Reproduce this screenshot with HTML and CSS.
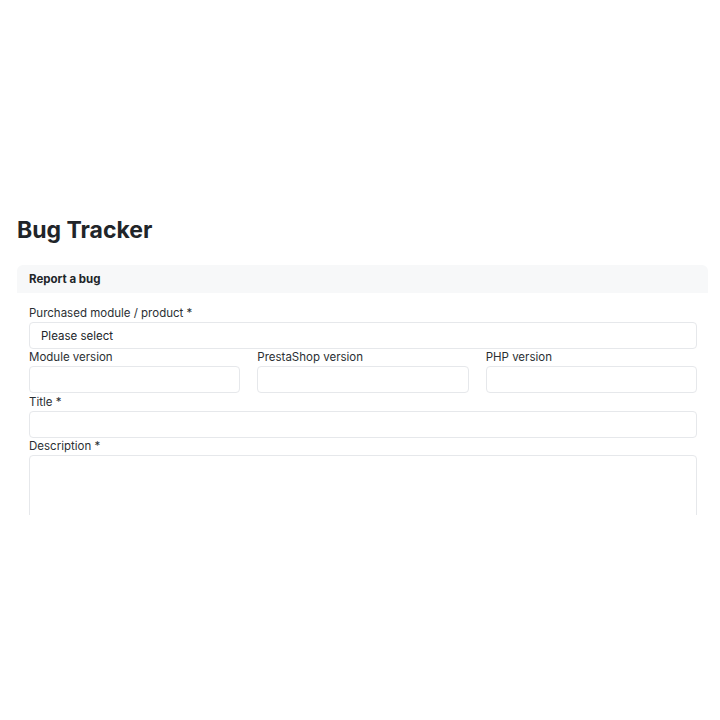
FILE: index.html
```html
<!DOCTYPE html>
<html lang="en">

<head>
    <meta charset="UTF-8">
    <meta name="viewport" content="width=device-width, initial-scale=1.0">
    <title>Bug Tracker</title>
    <link rel="stylesheet" href="styles.css">
</head>

<body>
    <div class="frame">
        <div class="page">
            <h1 class="title">Bug Tracker</h1>
            <div class="panel">
                <div class="panel-head">Report a bug</div>
                <form class="panel-body">
                    <label class="field-label" for="product">Purchased module / product *</label>
                    <select id="product" class="field">
                        <option>Please select</option>
                    </select>
                    <div class="row">
                        <div class="col">
                            <label class="field-label" for="module-version">Module version</label>
                            <input id="module-version" class="field" type="text">
                        </div>
                        <div class="col">
                            <label class="field-label" for="ps-version">PrestaShop version</label>
                            <input id="ps-version" class="field" type="text">
                        </div>
                        <div class="col">
                            <label class="field-label" for="php-version">PHP version</label>
                            <input id="php-version" class="field" type="text">
                        </div>
                    </div>
                    <label class="field-label" for="bug-title">Title *</label>
                    <input id="bug-title" class="field" type="text">
                    <label class="field-label" for="description">Description *</label>
                    <textarea id="description" class="field area"></textarea>
                </form>
            </div>
        </div>
    </div>
</body>

</html>
```

FILE: styles.css
```css
body {
    margin: 0;
    background-color: #ffffff;
    font-family: Inter, "Noto Sans", Arial, sans-serif;
    color: #212529;
}

.frame {
    height: 515px;
    overflow: hidden;
}

.page {
    padding: 214px 12px 0 17px;
}

.title {
    margin: 0 0 19px 0;
    font-size: 23px;
    line-height: 32px;
    font-weight: 700;
    color: #212529;
}

.panel {
    border-radius: 6px;
}

.panel-head {
    height: 28px;
    padding: 0 12px;
    line-height: 28px;
    font-size: 11.5px;
    font-weight: 700;
    background-color: #f7f8f9;
    border-radius: 6px 6px 0 0;
}

.panel-body {
    display: flex;
    flex-direction: column;
    padding: 12px 11px 0 12px;
}

.field-label {
    display: block;
    font-size: 11.5px;
    line-height: 17px;
    color: #2b2f33;
}

.field {
    box-sizing: border-box;
    display: block;
    width: 100%;
    height: 27px;
    margin: 0;
    padding: 0 11px;
    border: 1px solid #e6e8eb;
    border-radius: 4px;
    background-color: #ffffff;
    font-family: inherit;
    font-size: 11.5px;
    color: #212529;
    appearance: none;
    -webkit-appearance: none;
    outline: none;
}

.row {
    display: flex;
    gap: 17px;
    padding-bottom: 1px;
}

.col {
    flex: 1;
}

.area {
    height: 140px;
    resize: none;
}
```
